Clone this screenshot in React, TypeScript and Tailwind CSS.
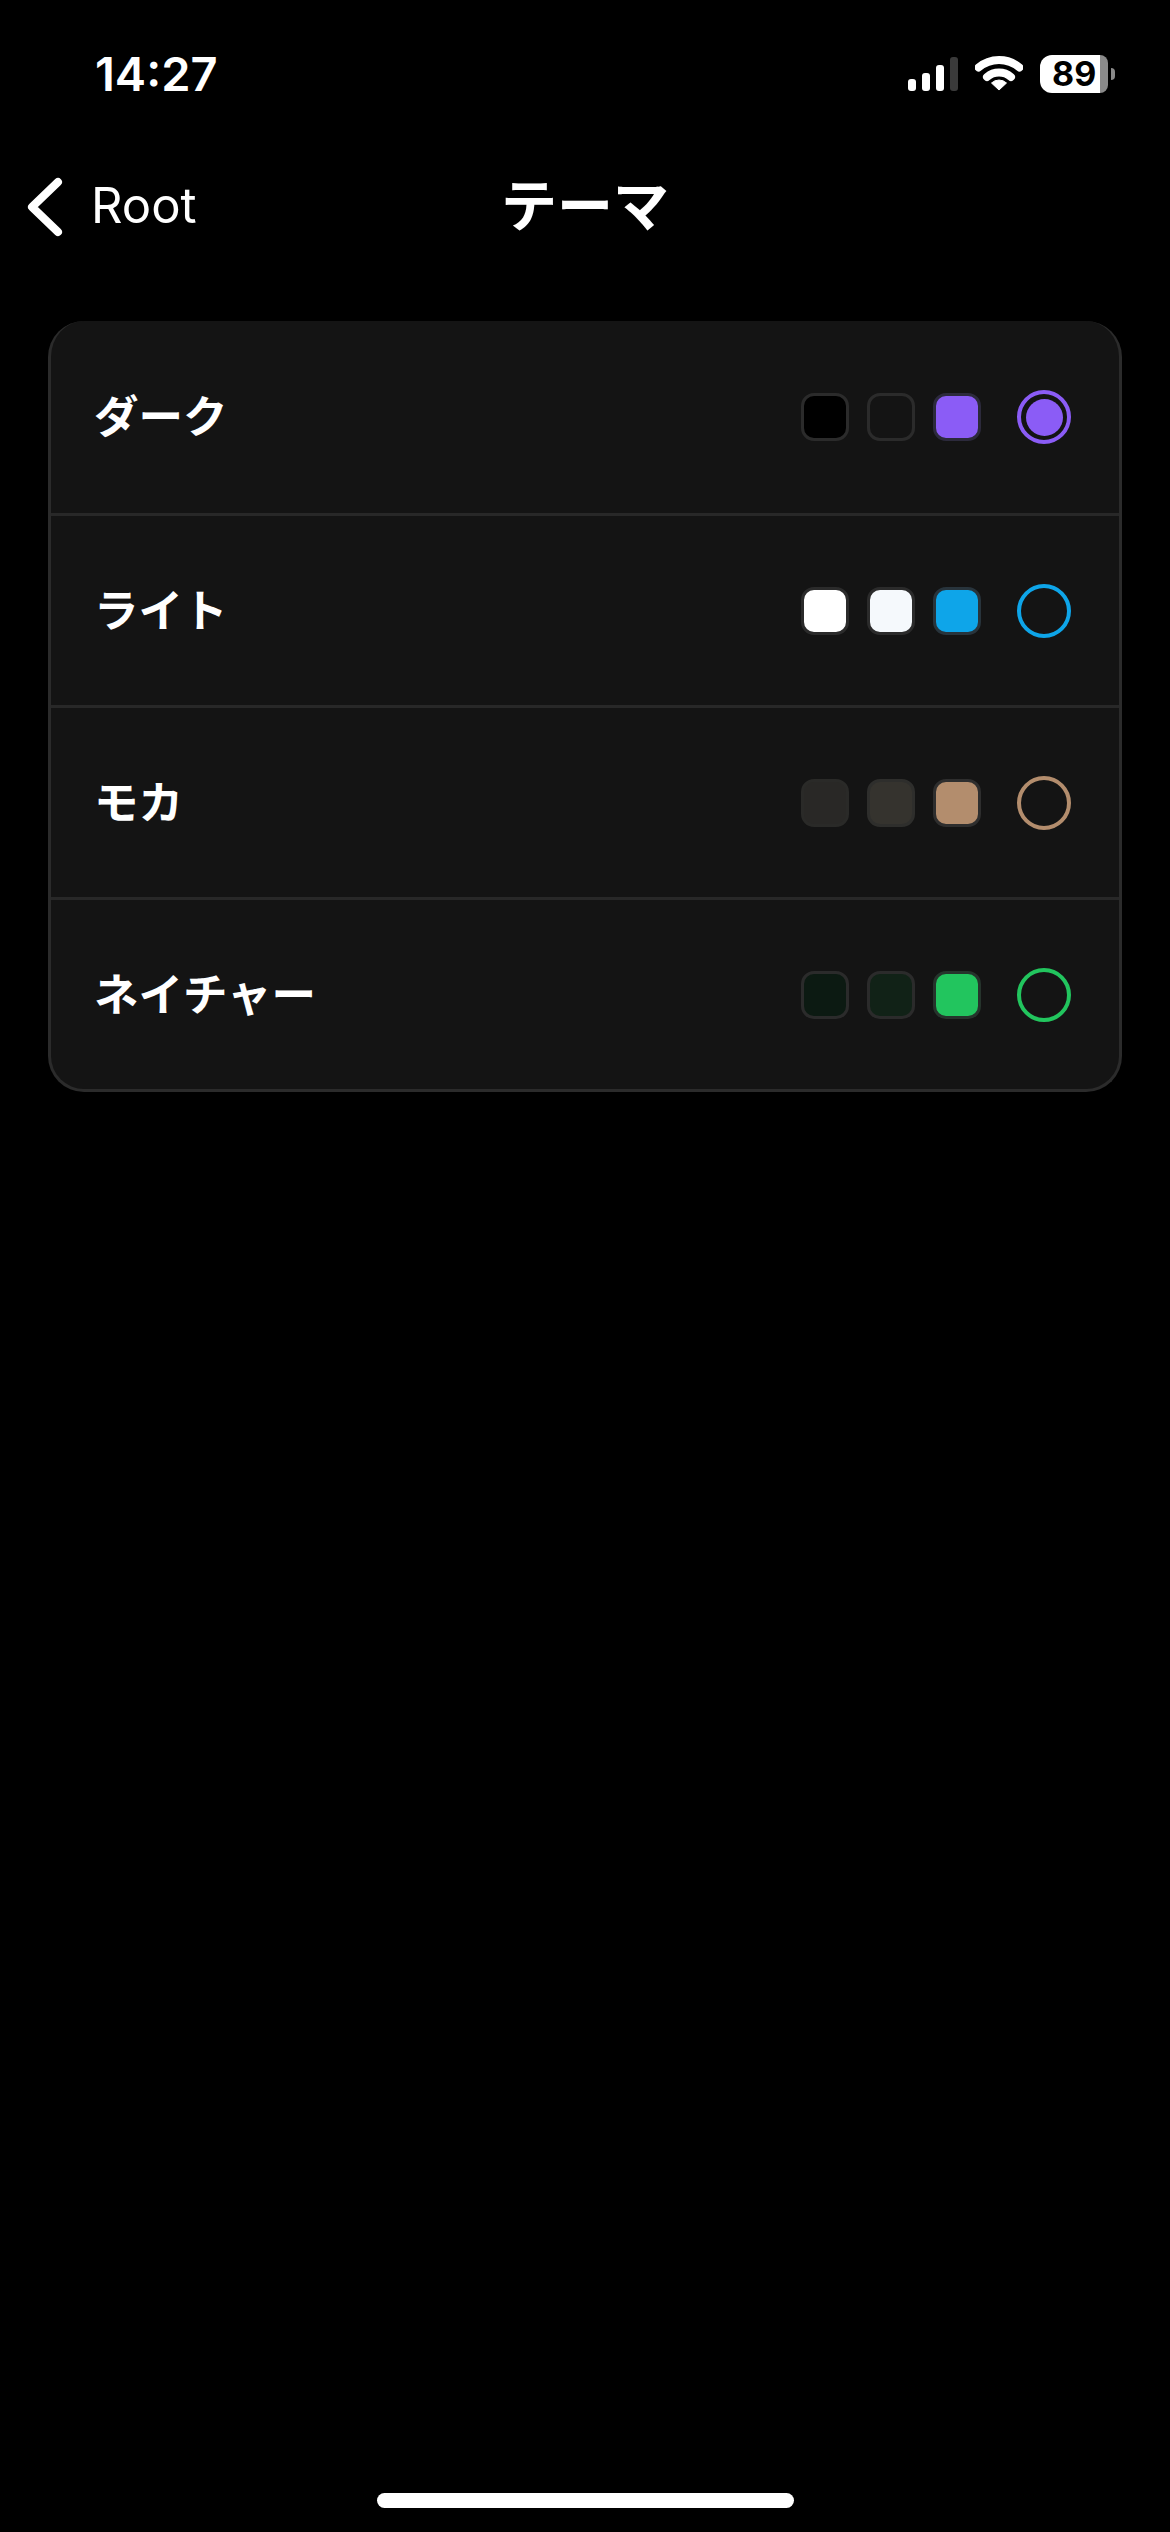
const themes = [
  { name: "ダーク", a: "bg-[#000000]", b: "bg-[#141414]", c: "bg-[#8b5cf6]", ca: "border-[#2c2a3c]", ring: "border-[#8b5cf6]", selected: true, ab: "border-[#2b2b2b]", bb: "border-[#2b2b2b]" },
  { name: "ライト", a: "bg-[#ffffff]", b: "bg-[#f5f9fc]", c: "bg-[#0ea5e9]", ca: "border-[#28343c]", ring: "border-[#0ea5e9]", selected: false, ab: "border-[#2b2b2b]", bb: "border-[#2b2b2b]" },
  { name: "モカ", a: "bg-[#292826]", b: "bg-[#35332e]", c: "bg-[#b38d6d]", ca: "border-[#2e2e2e]", ring: "border-[#b38d6d]", selected: false, ab: "border-[#2a2a28]", bb: "border-[#2e2e2c]" },
  { name: "ネイチャー", a: "bg-[#0c1a12]", b: "bg-[#112217]", c: "bg-[#22c55e]", ca: "border-[#26342c]", ring: "border-[#22c55e]", selected: false, ab: "border-[#2b2b2b]", bb: "border-[#2b2b2b]" },
];

function Wifi() {
  return (
    <svg width="48" height="36" viewBox="0 0 48 36" fill="none" className="block">
      <path d="M3.5 12.5 A31.5 31.5 0 0 1 44.5 12.5" stroke="white" strokeWidth="8" strokeLinecap="round" />
      <path d="M12 22 A18.5 18.5 0 0 1 36 22" stroke="white" strokeWidth="8" strokeLinecap="round" />
      <path d="M24 35 L16.5 28 A11 11 0 0 1 31.5 28 Z" fill="white" stroke="white" strokeWidth="1" strokeLinejoin="round" />
    </svg>
  );
}

function StatusBar() {
  return (
    <div className="h-[147px] flex items-start justify-between shrink-0">
      <div className="ml-[95px] mt-[46px] text-[47px] leading-[56px] font-semibold text-white font-['Inter',sans-serif]">14:27</div>
      <div className="flex items-end mt-[55px] mr-[55px]">
        <div className="flex items-end gap-[5.5px] h-[36px] mb-[2px]">
          <div className="w-[8.5px] h-[12px] rounded-[3px] bg-white" />
          <div className="w-[8.5px] h-[18px] rounded-[3px] bg-white" />
          <div className="w-[8.5px] h-[26px] rounded-[3px] bg-white" />
          <div className="w-[8.5px] h-[34px] rounded-[3px] bg-[#3a3a3a]" />
        </div>
        <div className="ml-[17px] mb-[2px]"><Wifi /></div>
        <div className="ml-[17px] flex items-center">
          <div className="flex w-[68px] h-[38px]">
            <div className="w-[60px] h-full bg-white rounded-l-[12px] flex items-center pl-[12px]">
              <span className="text-[34px] leading-none font-bold text-black font-['Inter',sans-serif]">89</span>
            </div>
            <div className="w-[8px] h-full bg-[#8a8a8a] rounded-r-[12px]" />
          </div>
          <div className="ml-[3px] w-[4px] h-[12px] rounded-r-full bg-[#8a8a8a]" />
        </div>
      </div>
    </div>
  );
}

function Nav() {
  return (
    <div className="relative h-[112px] flex items-center shrink-0 text-white">
      <svg width="37" height="60" viewBox="0 0 37 60" fill="none" className="ml-[26px] mt-[7px]">
        <path d="M32 5 L6 30 L32 55" stroke="white" strokeWidth="8" strokeLinecap="round" strokeLinejoin="round" />
      </svg>
      <span className="ml-[28px] mt-[6px] text-[49px] leading-[60px] font-normal font-['Inter',sans-serif]">Root</span>
      <div className="absolute inset-x-0 top-[-1px] h-[112px] flex items-center justify-center">
        <span className="text-[56px] leading-[64px] font-bold font-['Noto_Sans_CJK_JP',sans-serif]">テーマ</span>
      </div>
    </div>
  );
}

function Row({ t, i, last }: { t: (typeof themes)[number]; i: number; last: boolean }) {
  return (
    <div className={`box-content flex items-center pl-[43px] pr-[48px] ${i === 0 ? "h-[192px]" : "h-[189px]"} ${last ? "" : "border-b-[3px] border-[#282828]"}`}>
      <span className="flex-1 pb-[6px] text-[44.5px] leading-[56px] font-bold text-white font-['Noto_Sans_CJK_JP',sans-serif]">{t.name}</span>
      <div className="flex items-center gap-[18px]">
        <div className={`w-[48px] h-[48px] rounded-[13px] border-[3px] ${t.a} ${t.ab}`} />
        <div className={`w-[48px] h-[48px] rounded-[13px] border-[3px] ${t.b} ${t.bb}`} />
        <div className={`w-[48px] h-[48px] rounded-[13px] border-[3px] ${t.c} ${t.ca}`} />
      </div>
      <div className={`ml-[36px] w-[54px] h-[54px] rounded-full border-[4.5px] flex items-center justify-center ${t.ring}`}>
        {t.selected && <div className="w-[37px] h-[37px] rounded-full bg-[#8b5cf6]" />}
      </div>
    </div>
  );
}

export default function App() {
  return (
    <div className="w-[1170px] h-[2532px] bg-black flex flex-col overflow-hidden">
      <StatusBar />
      <Nav />
      <div className="mt-[62px] mx-[48px] rounded-[36px] border-x-[3px] border-b-[3px] border-[#2b2b2b] bg-[#141414] shrink-0 overflow-hidden">
        {themes.map((t, i) => (
          <Row key={t.name} t={t} i={i} last={i === themes.length - 1} />
        ))}
      </div>
      <div className="flex-1" />
      <div className="h-[39px] shrink-0 flex justify-center">
        <div className="w-[417px] h-[15px] rounded-[8px] bg-white" />
      </div>
    </div>
  );
}
